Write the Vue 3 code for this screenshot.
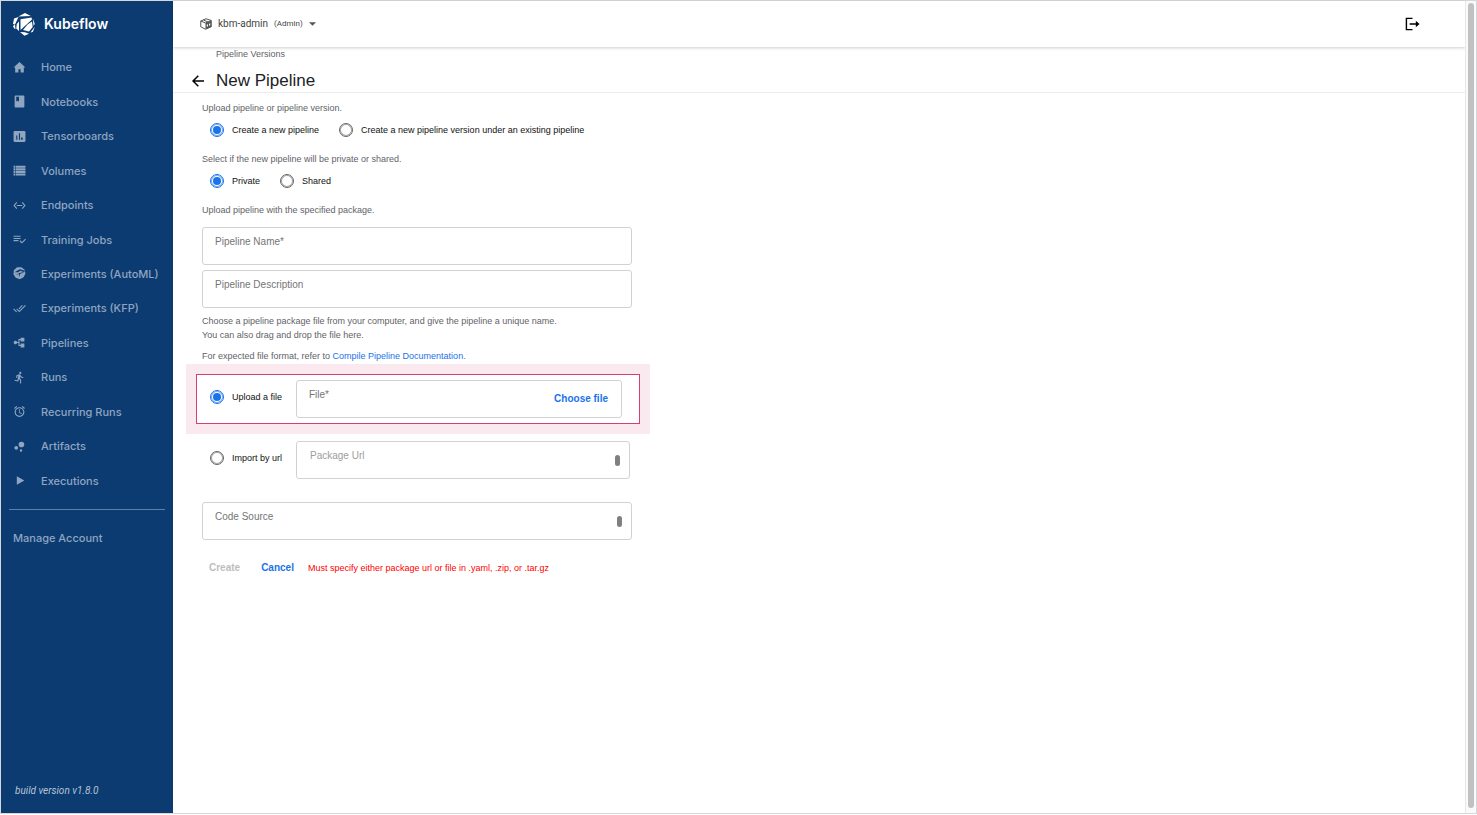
<script setup>
import { ref } from 'vue'

const nav = [
  { label: 'Home', path: 'M10 21v-6h4v6h6v-9h3L12 2 1 12h3v9z' },
  { label: 'Notebooks', path: 'M19 1H5c-1.100 0-2 .9-2 2v18c0 1.100.9 2 2 2h14c1.100 0 2-.9 2-2V3c0-1.100-.9-2-2-2zM6 3h5v9l-2.500-1.500L6 12V3z' },
  { label: 'Tensorboards', path: 'M21 2H3c-1.100 0-2 .9-2 2v16c0 1.100.9 2 2 2h18c1.100 0 2-.9 2-2V4c0-1.100-.9-2-2-2zM8 18H6v-8h2v8zm5 0h-2V6h2v12zm5 0h-3v-4h3v4z' },
  { label: 'Volumes', path: 'M1 3h3v4H1zM5 3h18v4H5zM1 8h3v4H1zM5 8h18v4H5zM1 13h3v4H1zM5 13h18v4H5zM1 18h3v3H1zM5 18h18v3H5z' },
  { label: 'Endpoints', path: 'M7.770 6.760L6.230 5.480.82 12l5.410 6.520 1.540-1.280L3.420 12l4.350-5.240zM7 13h10v-2H7zM17.770 5.480l-1.540 1.280L20.580 12l-4.350 5.240 1.540 1.280L23.180 12l-5.410-6.520z' },
  { label: 'Training Jobs', path: 'M14 9H1v2h13V9zm0-4H1v2h13V5zM1 15h9v-2H1v2zm21.500-4.500L24 12l-7.500 7.500-4.500-4.500 1.500-1.500 3 3 6-6z' },
  { label: 'Experiments (AutoML)', path: 'M7.500 .5h8l6 4.500 1.500 7-3.500 7-7 3.500-7.500-2.500-4-6 .5-8zM3 9.500l7 0 3-2.500 7 2-8 2-8 4 7-2v7l2-7 8-4 1-2-9-3-4 2z' },
  { label: 'Experiments (KFP)', path: 'M18 7l-1.410-1.410-6.340 6.340 1.410 1.410L18 7zm4.240-1.410L11.660 16.170 7.480 12l-1.410 1.410L11.660 19l12-12-1.420-1.410zM.41 13.410L6 19l1.410-1.410L1.830 12 .41 13.410z' },
  { label: 'Pipelines', path: 'M14 3h7v7h-7V7.500h-2v9h2V14h7v7h-7v-2.500h-4V13H7.600a3.300 3.300 0 1 1 0-2H10V5.500h4z' },
  { label: 'Runs', path: 'M13.490 5.480c1.100 0 2-.9 2-2s-.9-2-2-2-2 .9-2 2 .9 2 2 2zm-3.600 13.900l1-4.400 2.100 2v6h2v-7.500l-2.100-2 .6-3c1.300 1.500 3.300 2.500 5.500 2.500v-2c-1.900 0-3.500-1-4.300-2.400l-1-1.600c-.4-.6-1-1-1.700-1-.3 0-.5.1-.8.1l-5.200 2.200v4.700h2v-3.400l1.800-.7-1.600 8.100-4.900-1-.4 2 7 1.400z' },
  { label: 'Recurring Runs', path: 'M22 5.720l-4.600-3.860-1.290 1.530 4.600 3.860L22 5.720zM7.880 3.390L6.600 1.860 2 5.710l1.290 1.530 4.590-3.850zM12.500 8H11v6l4.750 2.850.75-1.230-4-2.370V8zM12 4c-4.970 0-9 4.030-9 9s4.020 9 9 9c4.970 0 9-4.030 9-9s-4.030-9-9-9zm0 16c-3.870 0-7-3.130-7-7s3.130-7 7-7 7 3.130 7 7-3.130 7-7 7z' },
  { label: 'Artifacts', path: 'M2.500 14.500a3.500 3.500 0 1 0 7 0a3.500 3.500 0 1 0-7 0zM12.500 19.500a2.300 2.300 0 1 0 4.600 0a2.300 2.300 0 1 0-4.600 0zM10.400 8.300a5.200 5.200 0 1 0 10.400 0a5.200 5.200 0 1 0-10.400 0z' },
  { label: 'Executions', path: 'M7 4v16l14-8z' },
]

const mode = ref('pipeline')
const visibility = ref('private')
const source = ref('file')
const name = ref('')
const description = ref('')
const file = ref('')
const url = ref('')
const code = ref('')
</script>

<template>
  <div class="app">
    <aside class="sidebar">
      <a class="brand" href="#">
        <svg class="logo" viewBox="0 0 24 24" fill="#fff" aria-hidden="true">
          <path d="M6.300 4.500L13 1l5.800 3zM2 6.500L6.500 5 3 12.500 1 12zM8.500 7.300L19.500 5.500 20 7.500 8.500 18zM7 9.500V19l-2.800-2.500L4.800 12zM1 14l2-1.500.5 4.700-1.500-1zM20.800 6.500l2 5.500-1.300 1.800zM15.500 12.500L20 9.500l.7 5.500-3.700 4.500-6-1.500zM21.500 16.500l1.300-1.500-2 5-2.300.5zM8 20l5 .3 4 1.500L12.500 23.800z" />
        </svg>
        <span>Kubeflow</span>
      </a>
      <nav class="nav">
        <a v-for="item in nav" :key="item.label" class="nav-item" href="#">
          <svg class="nav-icon" viewBox="0 0 24 24" fill="currentColor" fill-rule="evenodd" aria-hidden="true"><path :d="item.path" /></svg>
          <span>{{ item.label }}</span>
        </a>
      </nav>
      <a class="account" href="#">Manage Account</a>
      <div class="version">build version v1.8.0</div>
    </aside>

    <div class="page">
      <header class="topbar">
        <button class="namespace" type="button">
          <svg class="cube" viewBox="0 0 24 24" aria-hidden="true">
            <path d="M1.500 6L12 1.500l10.500 3.500v12.500L11 22.500 1.500 17.500z" fill="#fff" stroke="#555" stroke-width="2" stroke-linejoin="round" />
            <path d="M11 10.500l11.500-5v12L11 22.500z" fill="#555" />
            <path d="M1.500 6L11 10 22.500 5M7 4l9 4" fill="none" stroke="#555" stroke-width="2" />
            <path d="M13.500 13.500l2.500-1v4l-2.500 1zM18 11.500l2.500-1v4l-2.500 1z" fill="#fff" />
          </svg>
          <span>kbm-admin</span>
          <small>(Admin)</small>
          <svg class="caret" viewBox="0 0 8 4" aria-hidden="true"><path d="M0 0h8L4 4z" fill="#555" /></svg>
        </button>
        <button class="logout" type="button" aria-label="Log out">
          <svg viewBox="0 0 16 14" aria-hidden="true">
            <path d="M8 1H1.500v12H8M5 7h8" fill="none" stroke="#000" stroke-width="1.500" />
            <path d="M11.500 3.500L15.500 7l-4 3.500z" fill="#000" />
          </svg>
        </button>
      </header>

      <div class="titlebar">
        <a class="crumb" href="#">Pipeline Versions</a>
        <div class="title-row">
          <button class="back" type="button" aria-label="Back">
            <svg viewBox="0 0 12 12" fill="none" stroke="#000" stroke-width="1.500" aria-hidden="true"><path d="M12 6H1M6.300 .7L1 6l5.300 5.300" /></svg>
          </button>
          <h1>New Pipeline</h1>
        </div>
      </div>

      <form class="form" @submit.prevent>
        <p>Upload pipeline or pipeline version.</p>
        <div class="radios">
          <label class="radio"><input v-model="mode" type="radio" name="mode" value="pipeline" />Create a new pipeline</label>
          <label class="radio"><input v-model="mode" type="radio" name="mode" value="version" />Create a new pipeline version under an existing pipeline</label>
        </div>
        <p>Select if the new pipeline will be private or shared.</p>
        <div class="radios">
          <label class="radio"><input v-model="visibility" type="radio" name="visibility" value="private" />Private</label>
          <label class="radio"><input v-model="visibility" type="radio" name="visibility" value="shared" />Shared</label>
        </div>
        <p>Upload pipeline with the specified package.</p>

        <div class="fields">
          <div class="field">
            <div class="field-main"><label for="name">Pipeline Name*</label><input id="name" v-model="name" type="text" /></div>
          </div>
          <div class="field">
            <div class="field-main"><label for="description">Pipeline Description</label><input id="description" v-model="description" type="text" /></div>
          </div>
        </div>

        <p>Choose a pipeline package file from your computer, and give the pipeline a unique name.<br />You can also drag and drop the file here.</p>
        <p class="format">For expected file format, refer to <a href="#">Compile Pipeline Documentation.</a></p>

        <div class="highlight">
          <div class="highlight-box">
            <label class="radio source"><input v-model="source" type="radio" name="source" value="file" />Upload a file</label>
            <div class="field">
              <div class="field-main"><label for="file">File*</label><input id="file" v-model="file" type="text" /></div>
              <button class="choose" type="button">Choose file</button>
            </div>
          </div>
        </div>

        <div class="url-row">
          <label class="radio source"><input v-model="source" type="radio" name="source" value="url" />Import by url</label>
          <div class="field muted">
            <div class="field-main"><label for="url">Package Url</label><input id="url" v-model="url" type="text" /></div>
            <span class="grip"></span>
          </div>
        </div>

        <div class="field code">
          <div class="field-main"><label for="code">Code Source</label><input id="code" v-model="code" type="text" /></div>
          <span class="grip"></span>
        </div>

        <div class="actions">
          <button class="create" type="submit" disabled>Create</button>
          <button class="cancel" type="button">Cancel</button>
          <span class="error">Must specify either package url or file in .yaml, .zip, or .tar.gz</span>
        </div>
      </form>
    </div>

    <div class="scrollbar"><div class="thumb"></div></div>
  </div>
</template>

<style>
body {
  background: #fff;
}
</style>

<style scoped>
* {
  box-sizing: border-box;
}
.app {
  display: flex;
  min-height: calc(100vh - 1px);
  border: 1px solid #d5d7d9;
  background: #fff;
  font-family: "Liberation Sans", Arial, sans-serif;
  font-size: 9px;
  line-height: 14px;
  color: #5f6368;
}
a {
  text-decoration: none;
  color: inherit;
}
button {
  padding: 0;
  border: 0;
  background: none;
  font: inherit;
  color: inherit;
}
svg {
  display: block;
  flex: none;
}

.sidebar {
  display: flex;
  flex-direction: column;
  flex: none;
  width: 172px;
  background: #0b3b71;
  color: #8fa5c0;
  font-family: Inter, sans-serif;
  font-size: 11px;
  font-weight: 500;
}
.brand {
  display: flex;
  align-items: center;
  gap: 8px;
  height: 46px;
  padding-left: 11px;
  color: #fff;
  font-size: 14px;
  font-weight: 600;
}
.logo {
  width: 24px;
  height: 24px;
}
.nav {
  display: grid;
  grid-auto-rows: 1fr;
  height: 448px;
  margin-top: 3px;
}
.nav-item {
  display: flex;
  align-items: center;
  gap: 15px;
  padding-left: 12px;
}
.nav-icon {
  width: 13px;
  height: 13px;
}
.account {
  margin: 11px 8px 0;
  padding: 21px 4px 0;
  border-top: 1px solid #5e80a8;
}
.version {
  margin-top: auto;
  padding: 0 14px 15px;
  color: #b6c4d6;
  font-family: Roboto, sans-serif;
  font-size: 10px;
  font-weight: 400;
  font-style: italic;
}

.page {
  flex: 1;
  min-width: 0;
}
.topbar {
  display: flex;
  align-items: center;
  justify-content: space-between;
  height: 46px;
  padding: 0 45px 0 27px;
  box-shadow: 0 1px 3px rgba(0, 0, 0, 0.2);
}
.namespace {
  display: flex;
  align-items: center;
  gap: 6px;
  color: #444;
  font-family: Roboto, sans-serif;
  font-size: 10px;
}
.namespace small {
  font-size: 8px;
}
.cube {
  width: 12px;
  height: 12px;
}
.caret {
  width: 7px;
  height: 4px;
}
.logout svg {
  width: 15px;
  height: 14px;
}
.titlebar {
  height: 46px;
  border-bottom: 1px solid #ececec;
}
.crumb {
  display: block;
  padding-left: 43px;
}
.title-row {
  display: flex;
  align-items: center;
  gap: 12px;
  padding: 9px 0 0 19px;
}
.back svg {
  width: 12px;
  height: 12px;
}
h1 {
  margin: 0;
  color: #202124;
  font-size: 17px;
  font-weight: 400;
  line-height: 22px;
}

.form {
  padding: 8px 29px;
}
p {
  margin: 0;
}
.radios {
  display: flex;
  gap: 20px;
  margin: 5px 0 12px 8px;
}
.radio {
  display: flex;
  align-items: center;
  gap: 8px;
  height: 20px;
  color: #111;
}
.radio input {
  display: grid;
  place-items: center;
  flex: none;
  width: 14px;
  height: 14px;
  margin: 0;
  border: 1px solid #666;
  border-radius: 50%;
  outline: 0;
  box-shadow: inset 0 0 0 1px #a8a8a8;
  appearance: none;
}
.radio input:checked {
  border-color: #1a73e8;
  box-shadow: inset 0 0 0 1px #7baef3;
}
.radio input:checked::after {
  content: "";
  width: 8px;
  height: 8px;
  border-radius: 50%;
  background: #1a73e8;
}
.fields {
  display: grid;
  gap: 5px;
  margin: 10px 0 6px;
}
.field {
  display: flex;
  align-items: center;
  width: 430px;
  max-width: 100%;
  height: 38px;
  padding: 0 13px 0 12px;
  border: 1px solid #d2d2d2;
  border-radius: 3px;
  color: #757575;
  font-size: 10px;
}
.field-main {
  display: flex;
  flex-direction: column;
  flex: 1;
  min-width: 0;
  height: 100%;
  padding-top: 7px;
}
.field-main input {
  width: 100%;
  height: 14px;
  padding: 0;
  border: 0;
  outline: 0;
  background: none;
  font: inherit;
}
.format {
  margin-top: 7px;
}
.format a {
  color: #1a73e8;
}
.highlight {
  width: 464px;
  max-width: 100%;
  margin: 1px 0 7px -16px;
  padding: 10px;
  background: #fae9ef;
}
.highlight-box {
  display: flex;
  align-items: flex-start;
  height: 50px;
  padding: 5px 17px 0 13px;
  border: 1px solid #d63f74;
  background: #fff;
}
.highlight-box .field {
  flex: 1;
}
.source {
  flex: none;
  width: 86px;
  height: 34px;
}
.choose,
.create,
.cancel {
  color: #1a73e8;
  font-size: 10px;
  font-weight: 700;
}
.url-row {
  display: flex;
  width: 428px;
  max-width: 100%;
  padding-left: 8px;
}
.url-row .field {
  flex: 1;
  padding-left: 13px;
}
.muted {
  color: #9e9e9e;
}
.grip {
  width: 5px;
  height: 11px;
  margin-right: -4px;
  border-radius: 3px;
  background: #808080;
}
.code {
  margin-top: 23px;
}
.actions {
  display: flex;
  align-items: center;
  margin: 21px 0 0 7px;
}
.create {
  margin-right: 21px;
  color: #bdbdbd;
}
.cancel {
  margin-right: 14px;
}
.error {
  color: #f00;
}

.scrollbar {
  display: flex;
  flex: none;
  width: 11px;
  padding: 2px 2px 5px;
  border-left: 1px solid #e8e8e8;
  background: #fafafa;
}
.thumb {
  flex: 1;
  border-radius: 4px;
  background: #c1c1c1;
}
</style>
